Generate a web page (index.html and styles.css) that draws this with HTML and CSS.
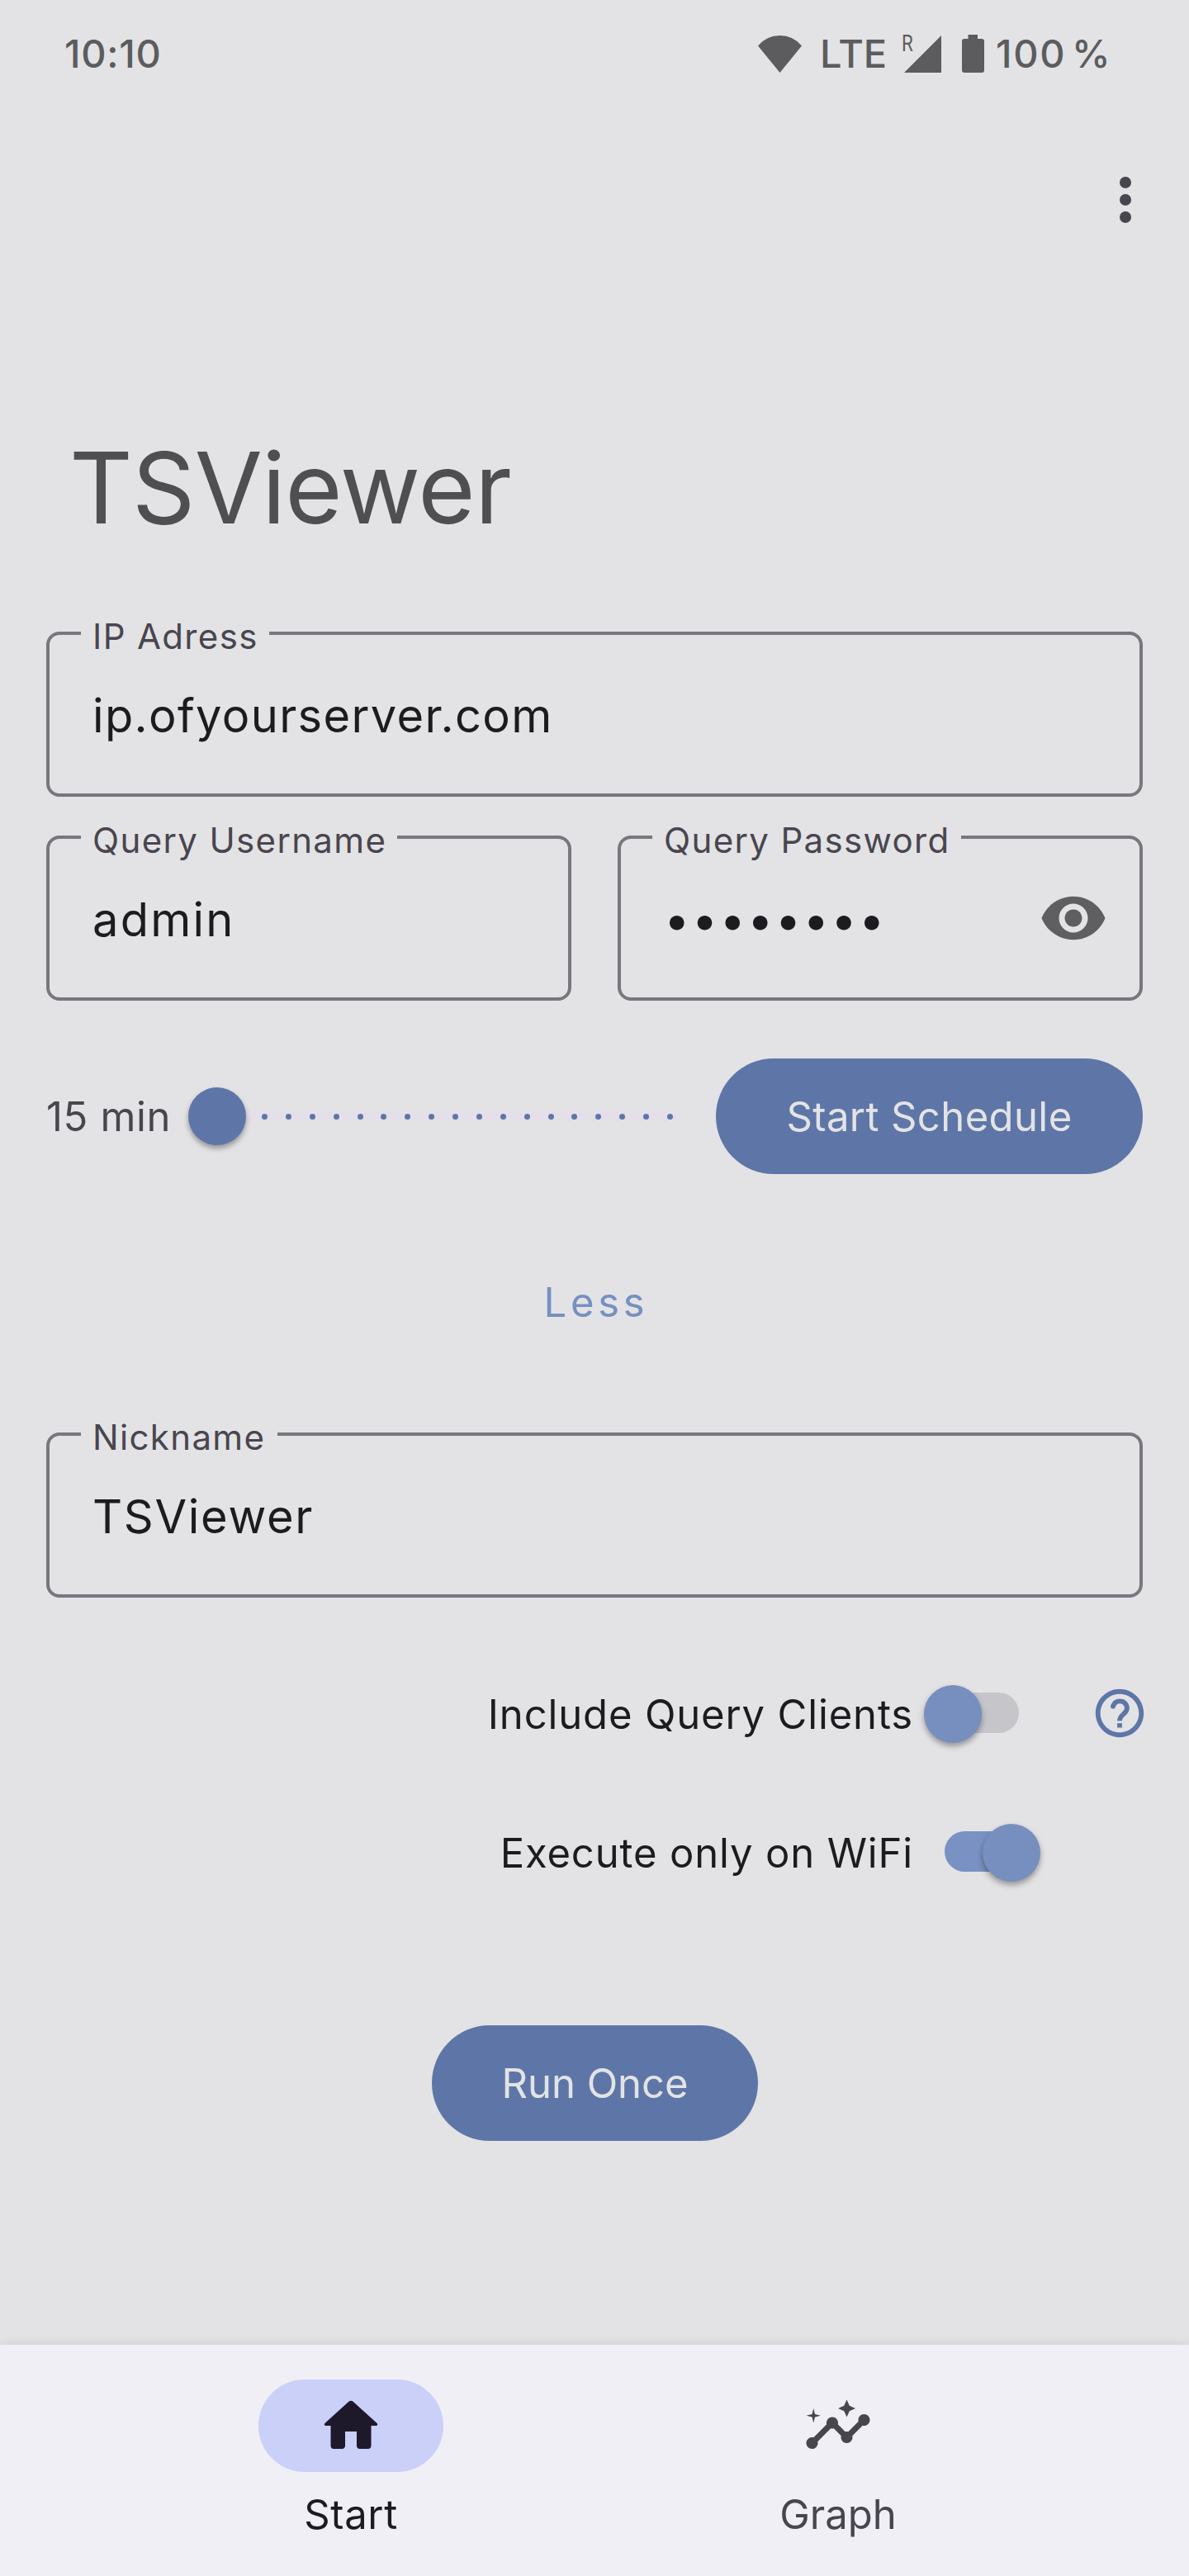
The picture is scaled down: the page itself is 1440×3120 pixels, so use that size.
FILE: index.html
```
<!DOCTYPE html>
<html lang="en">
<head>
<meta charset="utf-8">
<title>TSViewer</title>
<link rel="stylesheet" href="styles.css">
</head>
<body>
<div class="screen">
  <header class="status">
    <span class="clock">10:10</span>
    <div class="status-icons">
      <svg class="wifi" viewBox="0 0 53 45"><path d="M26.500 45L0 12.500Q10.500 0 26.500 0T53 12.500Z"/></svg>
      <span class="lte">LTE</span>
      <div class="signal">
        <svg viewBox="0 0 45 45"><path d="M45 0V45H0Z"/></svg>
        <span class="roaming">R</span>
      </div>
      <svg class="battery" viewBox="0 0 27 46"><path d="M7.500 0h11.500v5h5a3 3 0 0 1 3 3v35a3 3 0 0 1-3 3H3a3 3 0 0 1-3-3V8a3 3 0 0 1 3-3h4.500Z"/></svg>
      <span class="percent">100 %</span>
    </div>
  </header>

  <div class="appbar">
    <svg class="more" viewBox="0 0 24 24"><circle cx="12" cy="6" r="2"/><circle cx="12" cy="12" r="2"/><circle cx="12" cy="18" r="2"/></svg>
  </div>

  <main>
    <h1>TSViewer</h1>

    <div class="field">
      <span class="label ip">IP Adress</span>
      <span class="value address">ip.ofyourserver.com</span>
    </div>

    <div class="pair">
      <div class="field">
        <span class="label user">Query Username</span>
        <span class="value secret">admin</span>
      </div>
      <div class="field">
        <span class="label pass">Query Password</span>
        <span class="value secret">••••••••</span>
        <svg class="eye" viewBox="0 0 24 24"><path d="M12 4.500C7 4.500 2.730 7.610 1 12c1.730 4.390 6 7.500 11 7.500s9.270-3.110 11-7.500c-1.730-4.390-6-7.500-11-7.500zM12 17c-2.760 0-5-2.240-5-5s2.240-5 5-5 5 2.240 5 5-2.240 5-5 5zm0-8c-1.660 0-3 1.340-3 3s1.340 3 3 3 3-1.340 3-3-1.340-3-3-3z"/></svg>
      </div>
    </div>

    <div class="schedule">
      <span class="interval">15 min</span>
      <div class="slider">
        <div class="thumb"></div>
        <div class="ticks"><i></i><i></i><i></i><i></i><i></i><i></i><i></i><i></i><i></i><i></i><i></i><i></i><i></i><i></i><i></i><i></i><i></i><i></i></div>
      </div>
      <div class="button start">Start Schedule</div>
    </div>

    <div class="less">Less</div>

    <div class="field">
      <span class="label nick">Nickname</span>
      <span class="value nickname">TSViewer</span>
    </div>

    <div class="option first">
      <span>Include Query Clients</span>
      <div class="switch off"><div class="knob"></div></div>
      <svg class="help" viewBox="0 0 24 24"><path d="M12 2C6.480 2 2 6.480 2 12s4.480 10 10 10 10-4.480 10-10S17.520 2 12 2zm0 18c-4.410 0-8-3.590-8-8s3.590-8 8-8 8 3.590 8 8-3.590 8-8 8z"/><path d="M11 16.150h2v1.850h-2z"/><circle cx="9.250" cy="9.150" r="1"/><path class="hook" d="M9.250 9.150C9.700 7.850 10.800 7 12.050 7C13.900 7 15.050 8.400 15.050 9.900C15.050 12.300 12 12.500 12 15.150"/></svg>
    </div>
    <div class="option">
      <span>Execute only on WiFi</span>
      <div class="switch on"><div class="knob"></div></div>
    </div>

    <div class="button run">Run Once</div>
  </main>

  <nav>
    <div class="tab active">
      <div class="pill"><svg viewBox="0 0 24 24"><path d="M10 19v-5h4v5c0 .55.45 1 1 1h3c.55 0 1-.45 1-1v-7h1.700c.46 0 .68-.57.33-.87L12.670 3.600c-.38-.34-.96-.34-1.340 0l-8.360 7.530c-.34.3-.13.87.33.87H5v7c0 .55.45 1 1 1h3c.55 0 1-.45 1-1z"/></svg></div>
      <span>Start</span>
    </div>
    <div class="tab">
      <div class="pill"><svg viewBox="0 0 24 24"><path d="M21 8c-1.450 0-2.260 1.440-1.930 2.510l-3.550 3.560c-.3-.09-.74-.09-1.040 0l-2.550-2.550C12.270 10.450 11.460 9 10 9c-1.450 0-2.270 1.440-1.930 2.520l-4.560 4.550C2.440 15.740 1 16.550 1 18c0 1.100.9 2 2 2 1.450 0 2.260-1.440 1.930-2.510l4.550-4.560c.3.09.74.09 1.040 0l2.550 2.550C12.730 16.550 13.540 18 15 18c1.450 0 2.270-1.440 1.930-2.520l3.560-3.550C21.560 12.260 23 11.450 23 10c0-1.100-.9-2-2-2z"/><path d="M15 9l.94-2.070L18 6l-2.060-.93L15 3l-.92 2.070L12 6l2.080.93zM3.500 11L4 9l2-.5L4 8l-.5-2L3 8l-2 .5L3 9z"/></svg></div>
      <span>Graph</span>
    </div>
  </nav>
</div>
</body>
</html>
```
FILE: styles.css
```
* { box-sizing: border-box; }
body { margin: 0; background: #e3e3e5; }
svg { display: block; flex: none; fill: currentColor; }
.screen {
  width: 1440px; height: 3120px; overflow: hidden;
  display: flex; flex-direction: column;
  background: #e3e3e5; color: #1c1b1f;
  font-family: Inter, Roboto, sans-serif; font-size: 49px; line-height: 60px;
  white-space: nowrap;
}

.status {
  height: 130px; padding: 35px 100px 0 78px;
  display: flex; justify-content: space-between; align-items: flex-start;
  color: #5c5c5e; font-size: 47px; font-weight: 500;
}
.clock { letter-spacing: .7px; }
.status-icons { display: flex; align-items: flex-start; }
.wifi { width: 53px; height: 45px; margin: 8px 22px 0 0; }
.lte { width: 102px; }
.signal { position: relative; margin: 8px 25px 0 0; }
.signal svg { width: 45px; height: 45px; }
.roaming {
  position: absolute; left: -3px; top: -6px;
  font: 400 28px/32px Roboto, sans-serif; transform: scaleX(.8); transform-origin: left;
}
.battery { width: 27px; height: 46px; margin: 7px 14px 0 0; }
.percent { width: 134px; letter-spacing: 1.7px; word-spacing: -7.5px; }

.appbar { height: 389px; padding: 70px 35px 0 0; display: flex; justify-content: flex-end; color: #49454f; }
.more { width: 84px; height: 84px; }

main { flex: 1; padding: 0 56px; display: flex; flex-direction: column; }
h1 { margin: 0 0 102px 28px; font-size: 119px; font-weight: 400; line-height: 144px; letter-spacing: -.7px; color: #4f4f51; }

.field {
  position: relative; flex: none; height: 200px; padding: 3px 38px 0 52px;
  display: flex; align-items: center; justify-content: space-between;
  border: 4px solid #79767f; border-radius: 16px;
}
.label {
  position: absolute; left: 38px; top: -23px; padding-left: 14px;
  background: #e3e3e5; color: #49454f;
  font-size: 42px; line-height: 50px; letter-spacing: 1.35px;
}
.ip { width: 228px; }
.user { width: 383px; }
.pass { width: 374px; }
.nick { width: 238px; }
.value { font-size: 56px; line-height: 68px; }
.address { letter-spacing: 1.35px; }
.secret { letter-spacing: 2.2px; }
.nickname { letter-spacing: 1.7px; }
.eye { width: 84px; height: 84px; margin-top: -3px; color: #5f5f62; }

.pair { margin-top: 47px; display: grid; grid-template-columns: 1fr 1fr; gap: 56px; }

.schedule { height: 140px; margin-top: 70px; display: flex; align-items: center; color: #49454f; }
.interval { width: 172px; padding-top: 2px; letter-spacing: .65px; }
.slider { width: 639px; display: flex; align-items: center; }
.thumb {
  position: relative; width: 70px; height: 70px; border-radius: 50%;
  background: #5e76a7; box-shadow: 0 4px 6px rgba(0,0,0,.35);
}
.ticks {
  width: 532px; height: 14px; margin-left: -12px; padding: 0 3px 0 31px;
  display: flex; align-items: center; justify-content: space-between;
  border-radius: 7px; background: #e5dfea;
}
.ticks i { width: 7px; height: 7px; border-radius: 50%; background: #5e76a7; }
.button {
  height: 140px; flex: none; padding-top: 2px; border-radius: 70px; background: #5e76a7; color: #e3e3e5;
  display: flex; align-items: center; justify-content: center;
}
.start { width: 517px; letter-spacing: .4px; }

.less { margin: 126px 0 127px; padding-left: 4px; text-align: center; letter-spacing: 4.7px; color: #7690c1; }

.option { height: 70px; display: flex; align-items: center; letter-spacing: .85px; margin-bottom: 98px; }
.first { margin-top: 106px; }
.option span { flex: none; width: 1088px; padding: 2px 38px 0 0; text-align: right; }
.switch { flex: none; width: 90px; height: 49px; margin-top: -3px; border-radius: 24.5px; display: flex; align-items: center; }
.off { background: #c6c6ca; }
.on { background: #7992c3; }
.knob {
  flex: none; width: 70px; height: 70px; margin-top: 3px; border-radius: 50%; background: #768fbf;
  box-shadow: 0 4px 7px rgba(0,0,0,.35);
}
.off .knob { margin-left: -25px; }
.on .knob { margin-left: 46px; }
.help { width: 70px; height: 70px; margin: -2px 0 0 87px; color: #5e76a7; }
.hook { fill: none; stroke: currentColor; stroke-width: 2; }

.run { width: 395px; margin: 76px 0 0 467px; }

nav {
  height: 280px; padding: 42px 130px 0; display: flex;
  background: #f0eff6; box-shadow: 0 0 12px rgba(0,0,0,.1);
}
.tab { flex: 1; display: flex; flex-direction: column; align-items: center; gap: 22px; color: #49454f; }
.pill { width: 224px; height: 112px; border-radius: 56px; display: flex; align-items: center; justify-content: center; }
.pill svg { width: 84px; height: 84px; }
.active { color: #1c1b1f; letter-spacing: .65px; }
.active .pill { background: #cad0f8; color: #1d192b; }
```
